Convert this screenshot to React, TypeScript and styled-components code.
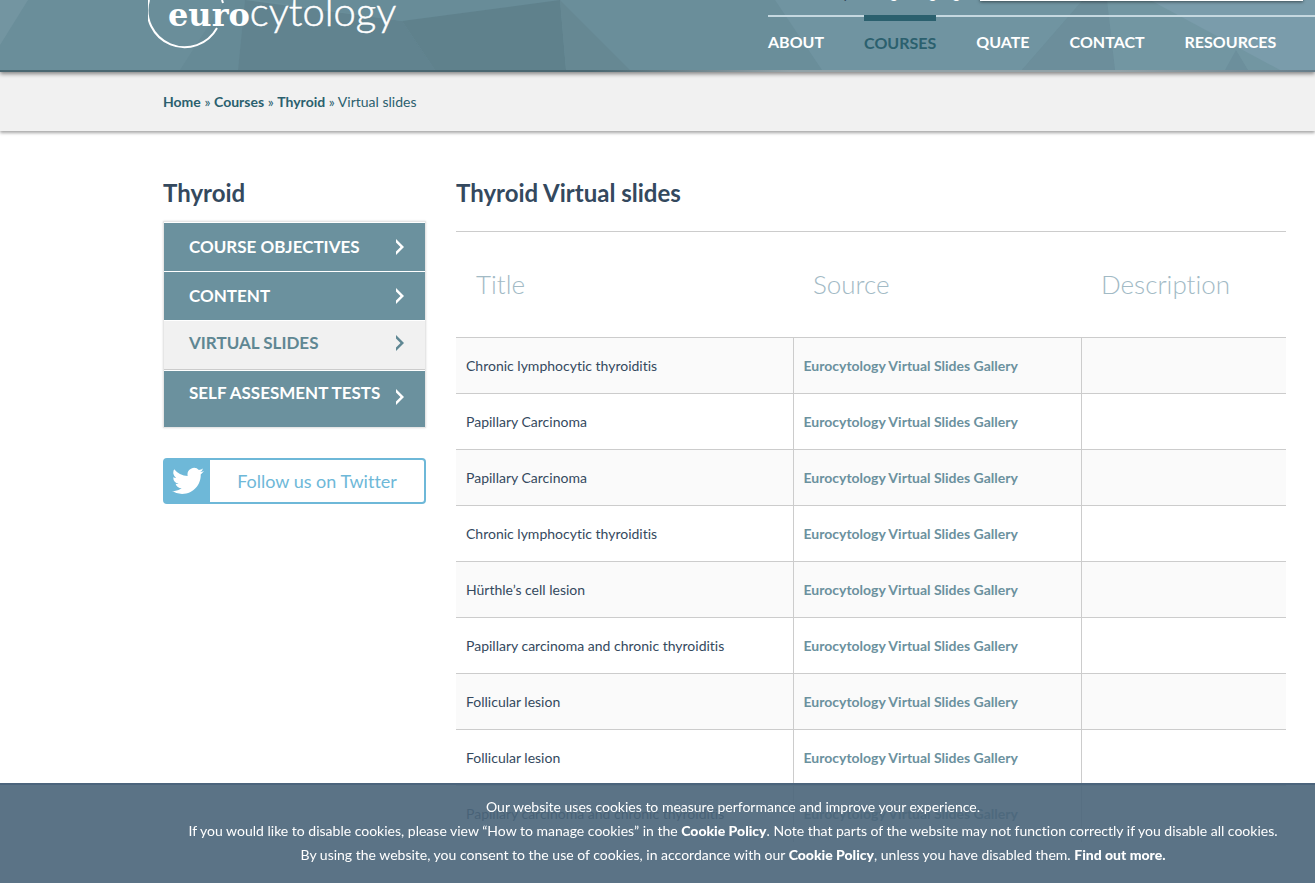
import React from "react";
import styled, { createGlobalStyle } from "styled-components";

const Global = createGlobalStyle`
  * { box-sizing: border-box; }
  html, body { margin: 0; padding: 0; }
  html { height: 100%; overflow: hidden; }
  body {
    height: 100%;
    overflow: hidden;
    background: #fff;
    color: #34495e;
    font: 14px/24px Lato, "Liberation Sans", sans-serif;
    font-variant-ligatures: none;
  }
  a { color: inherit; text-decoration: none; }
`;

const Header = styled.header`
  position: relative;
  display: flex;
  justify-content: space-between;
  align-items: flex-end;
  height: 72px;
  padding-left: 148px;
  background: #6a8e9a;
  border-bottom: 2px solid #4a6771;
  border-image: linear-gradient(90deg, #4a6771 45%, #93a3a8 60%, #93a3a8 85%, #667d8a) 1;
  box-shadow: 0 2px 4px rgba(0, 0, 0, 0.45);
`;
const Facets = styled.svg`
  position: absolute;
  inset: 0;
  width: 100%;
  height: 100%;
`;
const Logo = styled.a`
  position: relative;
  flex: none;
  width: 260px;
  height: 70px;
  svg { display: block; }
`;
const HeaderSide = styled.div`
  position: relative;
  flex: none;
  width: 547px;
`;
const LanguageRow = styled.div`
  display: flex;
  justify-content: flex-end;
  align-items: flex-end;
  gap: 12px;
  padding: 0 12px 14px 0;
  color: #fff;
  font-size: 15px;
  line-height: 18px;
  b { color: #34495e; font-weight: 400; }
`;
const SearchInput = styled.input`
  width: 323px;
  height: 30px;
  border: 0;
  background: #fff;
  box-shadow: 0 1px 3px rgba(0, 0, 0, 0.5);
`;
const Nav = styled.nav`
  display: flex;
  gap: 40px;
  height: 55px;
  border-top: 2px solid #c5d8e0;
`;
const NavLink = styled.a<{ $active?: boolean }>`
  margin-top: -2px;
  padding-top: ${(p) => (p.$active ? 10 : 15)}px;
  border-top: ${(p) => (p.$active ? "6px solid #2b606e" : "0")};
  color: ${(p) => (p.$active ? "#2b606e" : "#fff")};
  font-size: 16px;
  font-weight: 700;
`;

const Crumbs = styled.nav`
  height: 59px;
  padding: 18px 163px;
  background: #f1f1f1;
  box-shadow: 0 2px 3px rgba(0, 0, 0, 0.35);
  color: #2b606e;
  a { font-weight: 700; }
`;

const Page = styled.main`
  display: grid;
  grid-template-columns: 263px minmax(0, 1fr);
  gap: 30px;
  padding: 46px 29px 0 163px;
`;
const Heading = styled.h1`
  margin: 0;
  font-size: 24px;
  line-height: 32px;
  font-weight: 700;
`;
const SideMenu = styled.ul`
  margin: 12px 0 30px;
  padding: 2px 1px 1px;
  list-style: none;
  background: #fff;
  box-shadow: inset 0 0 0 1px #e6e6e6, 0 0 2px #ddd;
`;
const SideItem = styled.li<{ $active?: boolean; $tall?: boolean }>`
  height: ${(p) => (p.$tall ? 56 : 49)}px;
  margin-bottom: ${(p) => (p.$active ? 1 : 0)}px;
  background: ${(p) => (p.$active ? "#f1f1f1" : "#6b919e")};
  color: ${(p) => (p.$active ? "#5f8793" : "#fff")};
  border-bottom: ${(p) => (p.$tall ? 0 : 1)}px solid ${(p) => (p.$active ? "#ccc" : "#fff")};
  a {
    display: flex;
    justify-content: space-between;
    padding: ${(p) => (p.$tall || p.$active ? 10 : 12)}px 20px 0 25px;
    font-size: 17px;
    font-weight: 700;
    white-space: nowrap;
  }
  svg { margin-top: ${(p) => (p.$tall ? 8 : 4)}px; }
`;
const Twitter = styled.a`
  display: flex;
  height: 46px;
  border: 2px solid #6eb8d8;
  border-radius: 4px;
  background: #fff;
  color: #6eb8d8;
  font-size: 18px;
  line-height: 42px;
  span { flex: 1; text-align: center; }
`;
const Bird = styled.svg`
  width: 45px;
  height: 42px;
  padding: 5px 6px 5px 7px;
  background: #6eb8d8;
  fill: #fff;
`;

const Table = styled.table`
  width: 100%;
  margin-top: 22px;
  border-collapse: collapse;
  border-top: 1px solid #ccc;
  table-layout: fixed;
  th { height: 106px; padding: 0 20px 2px; text-align: left; color: #a2bac5; font-size: 26px; font-weight: 300; }
  td { height: 56px; padding: 0 10px; border-top: 1px solid #ccc; border-left: 1px solid #ccc; }
  td:first-child { border-left: 0; }
  tbody tr:nth-child(odd) { background: #fafafa; }
  td a { color: #6b919e; font-weight: 700; }
`;

const CookieBar = styled.aside`
  position: fixed;
  inset: auto 0 0 0;
  height: 100px;
  padding: 10px 0 0 151px;
  background: rgba(75, 101, 122, 0.91);
  border-top: 2px solid #4b647c;
  color: #fff;
  text-align: center;
  p { margin: 0; }
  a { font-weight: 900; }
`;

const titles = [
  "Chronic lymphocytic thyroiditis",
  "Papillary Carcinoma",
  "Papillary Carcinoma",
  "Chronic lymphocytic thyroiditis",
  "Hürthle’s cell lesion",
  "Papillary carcinoma and chronic thyroiditis",
  "Follicular lesion",
  "Follicular lesion",
  "Papillary carcinoma and chronic thyroiditis",
];
const navItems = ["About", "Courses", "Quate", "Contact", "Resources"];
const sideItems = ["Course objectives", "Content", "Virtual slides", "Self assesment tests"];

const Chevron = () => (
  <svg width="10" height="16" viewBox="0 0 10 16" fill="currentColor" aria-hidden="true">
    <path d="M1 0 9 8 1 16V12.5L5.5 8 1 3.5Z" />
  </svg>
);

export default function App() {
  return (
    <>
      <Global />
      <Header>
        <Facets viewBox="0 0 1315 70" preserveAspectRatio="none" aria-hidden="true">
          <path d="M0 0H28L0 45Z" fill="#7395a1" />
          <path d="M245 0 238 70H180L225 0Z" fill="#668a96" />
          <path d="M245 0 402 21 435 70H238Z" fill="#61838f" />
          <path d="M260 0H560L402 21Z" fill="#688c98" />
          <path d="M402 21 560 0 566 70H435Z" fill="#5f818c" />
          <path d="M560 0 630 70H566Z" fill="#668893" />
          <path d="M775 0H1083L1022 70H822Z" fill="#7094a1" />
          <path d="M1083 0H1107L1115 70H1022Z" fill="#6c8e9b" />
          <path d="M1107 0H1155L1290 70H1115Z" fill="#7296a2" />
          <path d="M1150 0H1315V70H1280Z" fill="#7a9cab" />
          <path d="M1236 50 1248 70H1225Z" fill="#6c8f9c" />
        </Facets>
        <Logo href="#" aria-label="eurocytology">
          <svg width="260" height="70" viewBox="0 0 260 70">
            <path d="M1 0A37 37 0 0 0 69 28M74 0 75 3" fill="none" stroke="#fff" strokeWidth="2" />
            <text x="20" y="26" fill="#fff">
              <tspan fontFamily="DejaVu Serif" fontWeight="700" fontSize="32">euro</tspan>
              <tspan fontFamily="Lato" fontWeight="300" fontSize="40" stroke="#fff" strokeWidth="0.5">cytology</tspan>
            </text>
          </svg>
        </Logo>
        <HeaderSide>
          <LanguageRow>
            <span><b>Help</b> Change language</span>
            <SearchInput aria-label="Search" />
          </LanguageRow>
          <Nav>
            {navItems.map((n) => (
              <NavLink key={n} href="#" $active={n === "Courses"}>{n.toUpperCase()}</NavLink>
            ))}
          </Nav>
        </HeaderSide>
      </Header>
      <Crumbs aria-label="Breadcrumb">
        <a href="#">Home</a> » <a href="#">Courses</a> » <a href="#">Thyroid</a> » Virtual slides
      </Crumbs>
      <Page>
        <div>
          <Heading as="h2">Thyroid</Heading>
          <SideMenu>
            {sideItems.map((s, i) => (
              <SideItem key={s} $active={i === 2} $tall={i === 3}>
                <a href="#">{s.toUpperCase()}<Chevron /></a>
              </SideItem>
            ))}
          </SideMenu>
          <Twitter href="#">
            <Bird viewBox="0 0 24 24" aria-hidden="true">
              <path d="M23.95 4.57a10 10 0 0 1-2.82.77 4.96 4.96 0 0 0 2.16-2.72c-.95.55-2 .96-3.13 1.18a4.92 4.92 0 0 0-8.38 4.48A13.98 13.98 0 0 1 1.64 3.16a4.92 4.92 0 0 0 1.52 6.57 4.9 4.9 0 0 1-2.23-.61v.06a4.92 4.92 0 0 0 3.95 4.83 5 5 0 0 1-2.21.08 4.94 4.94 0 0 0 4.6 3.42A9.87 9.87 0 0 1 0 19.54a13.99 13.99 0 0 0 7.55 2.21c9.05 0 14-7.5 14-13.98 0-.21 0-.42-.02-.63a9.94 9.94 0 0 0 2.46-2.55z" />
            </Bird>
            <span>Follow us on Twitter</span>
          </Twitter>
        </div>
        <section>
          <Heading>Thyroid Virtual slides</Heading>
          <Table>
            <colgroup><col width="337" /><col width="288" /><col /></colgroup>
            <thead><tr><th>Title</th><th>Source</th><th>Description</th></tr></thead>
            <tbody>
              {titles.map((t, i) => (
                <tr key={i}><td>{t}</td><td><a href="#">Eurocytology Virtual Slides Gallery</a></td><td /></tr>
              ))}
            </tbody>
          </Table>
        </section>
      </Page>
      <CookieBar>
        <p>Our website uses cookies to measure performance and improve your experience.</p>
        <p>If you would like to disable cookies, please view “How to manage cookies” in the <a href="#">Cookie Policy</a>. Note that parts of the website may not function correctly if you disable all cookies.</p>
        <p>By using the website, you consent to the use of cookies, in accordance with our <a href="#">Cookie Policy</a>, unless you have disabled them. <a href="#">Find out more.</a></p>
      </CookieBar>
    </>
  );
}
